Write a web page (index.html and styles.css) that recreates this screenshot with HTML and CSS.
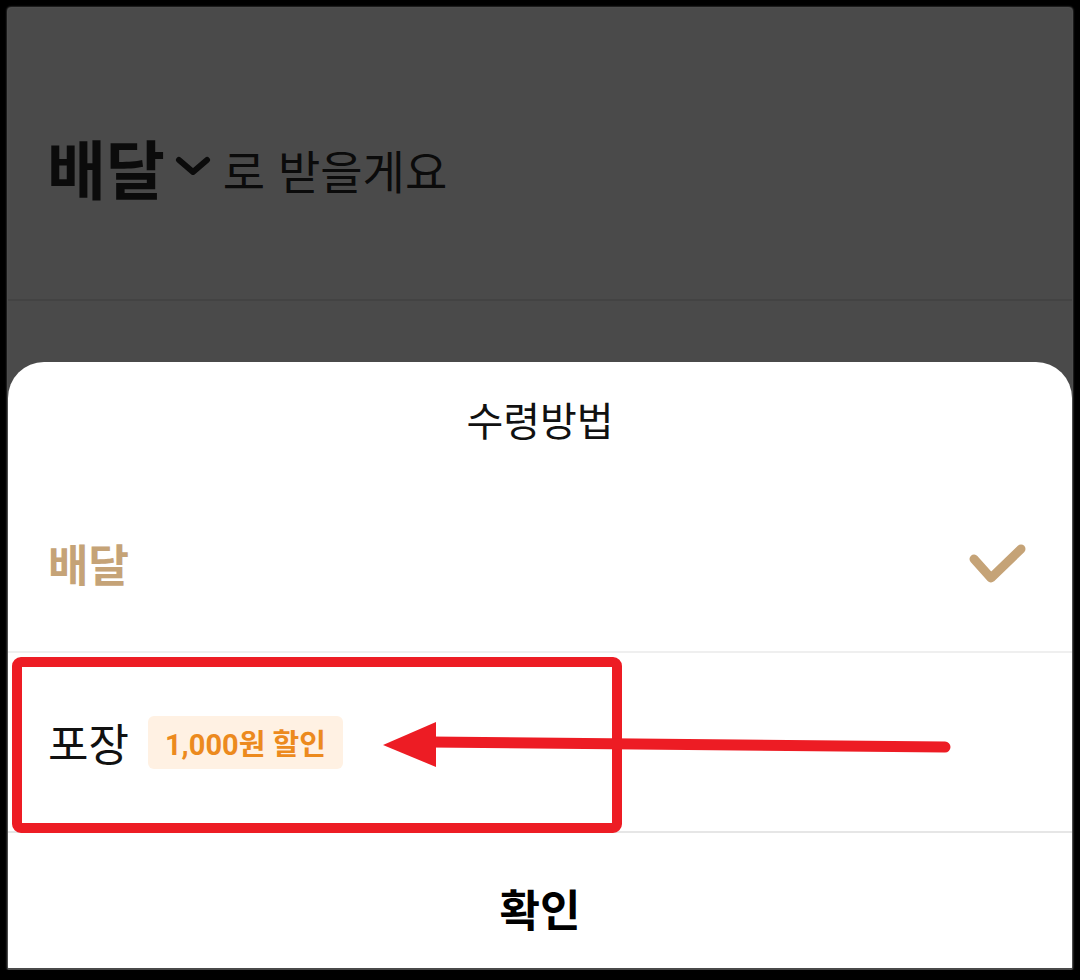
FILE: index.html
```html
<!DOCTYPE html>
<html lang="ko">
<head>
    <meta charset="UTF-8">
    <title>수령방법</title>
    <link rel="stylesheet" href="styles.css">
</head>
<body>
    <div class="screen">
        <div class="top">
            <span class="top-method">배달</span>
            <svg class="chevron" width="36" height="20" viewBox="0 0 36 20">
                <path d="M4 4 L18 16 L32 4" fill="none" stroke="#0b0b0b" stroke-width="6" stroke-linecap="round" stroke-linejoin="round"/>
            </svg>
            <span class="top-rest">로 받을게요</span>
        </div>
        <div class="gap"></div>

        <div class="sheet">
            <div class="sheet-title">수령방법</div>
            <div class="option first">
                <span class="option-name selected">배달</span>
                <svg class="check" width="60" height="44" viewBox="0 0 60 44">
                    <path d="M8 18 L25 37 L55 8" fill="none" stroke="#c5a377" stroke-width="9" stroke-linecap="round" stroke-linejoin="round"/>
                </svg>
            </div>
            <div class="option second">
                <span class="option-name">포장</span>
                <span class="badge">1,000원 할인</span>
            </div>
            <div class="confirm">확인</div>
        </div>

        <!-- 빨간 표시 (박스 + 화살표) -->
        <svg class="mark" width="1064" height="962" viewBox="0 0 1064 962">
            <rect x="9" y="654" width="600" height="166" rx="4" fill="none" stroke="#ed1c24" stroke-width="10"/>
            <line x1="937" y1="739" x2="422" y2="734" stroke="#ed1c24" stroke-width="11" stroke-linecap="round"/>
            <polygon points="375,737 428,714 428,759" fill="#ed1c24"/>
        </svg>
    </div>
</body>
</html>
```

FILE: styles.css
```css
*{
    padding: 0;
    margin: 0;
    box-sizing: border-box;
}
body{
    background-color: #000;
    font-family: "Noto Sans CJK KR", "Noto Sans", sans-serif;
}
.screen{
    position: relative;
    width: 1064px;
    height: 962px;
    margin: 8px 0 0 8px;
    background-color: #4a4a4a;
    overflow: hidden;
    border-radius: 3px;
    box-shadow: 0 0 2px 1px #6a6a6a;
}
.top{
    height: 293px;
    padding: 24px 0 0 39px;
    display: flex;
    align-items: center;
    color: #0b0b0b;
    border-bottom: 2px solid #434343;
}
.top-method{
    font-size: 64px;
    font-weight: 700;
    line-height: 1;
}
.chevron{
    margin: 0 12px 0 10px;
}
.top-rest{
    font-size: 46px;
    line-height: 1;
    padding-top: 6px;
}
.gap{
    height: 61px;
}
.sheet{
    height: 606px;
    background-color: #fff;
    border-radius: 36px 36px 0 0;
}
.sheet-title{
    height: 113px;
    display: flex;
    align-items: center;
    justify-content: center;
    font-size: 40px;
    color: #111;
}
.option{
    display: flex;
    align-items: center;
    padding: 0 46px 0 40px;
}
.option.first{
    height: 178px;
    border-bottom: 2px solid #efefef;
}
.option.second{
    height: 180px;
    border-bottom: 2px solid #e6e6e6;
}
.option-name{
    font-size: 44px;
    line-height: 1;
    color: #111;
}
.option-name.selected{
    font-weight: 700;
    color: #c5a377;
}
.check{
    margin-left: auto;
}
.badge{
    margin-left: 19px;
    height: 53px;
    padding: 0 17px;
    display: flex;
    align-items: center;
    background-color: #fff1e3;
    border-radius: 6px;
    font-family: "Roboto", "Noto Sans CJK KR", sans-serif;
    font-size: 29px;
    font-weight: 700;
    color: #ec8a1e;
}
.confirm{
    height: 133px;
    padding-top: 16px;
    display: flex;
    align-items: center;
    justify-content: center;
    font-size: 44px;
    font-weight: 700;
    color: #000;
}
.mark{
    position: absolute;
    top: 0;
    left: 0;
}
```
